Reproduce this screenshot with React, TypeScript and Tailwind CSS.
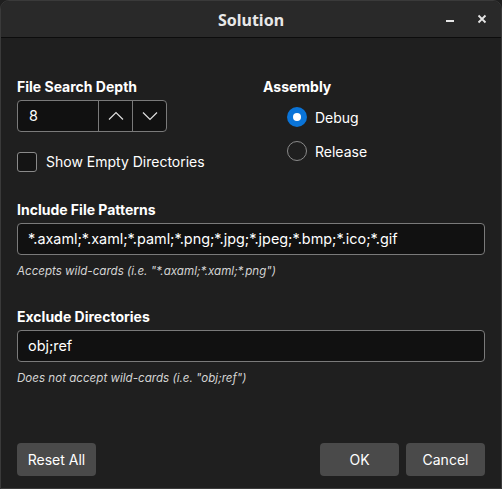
function Chevron({ up }: { up?: boolean }) {
  return (
    <svg width="16" height="10" viewBox="0 0 16 10">
      <path
        d={up ? 'M1 8.5 L8 1.5 L15 8.5' : 'M1 1.5 L8 8.5 L15 1.5'}
        fill="none"
        stroke="#e0e0e0"
        strokeWidth="1.2"
      />
    </svg>
  );
}

function App() {
  return (
    <div className="w-[502px] h-[489px] bg-[#1f1f1f] text-white overflow-hidden">
      <div className="w-full h-full flex flex-col border border-[#3a3a3a] rounded-t-[9px] overflow-hidden font-['Inter',sans-serif]">
        {/* title bar */}
        <div className="h-[37px] shrink-0 bg-[#292929] border-b border-[#0c0c0c] flex items-center justify-center relative">
          <span className="font-['Noto_Sans',sans-serif] font-bold text-[16px] text-[#e8e8e8] mt-[1px]">Solution</span>
          <div className="absolute right-[14px] top-0 h-full flex items-center gap-[23px]">
            <span className="block w-[8px] h-[2px] bg-[#e6e6e6] mt-[4px]" />
            <svg width="10" height="10" viewBox="0 0 10 10" className="-mt-[1px]">
              <path d="M1.5 1.5 L8.5 8.5 M8.5 1.5 L1.5 8.5" stroke="#e6e6e6" strokeWidth="1.8" />
            </svg>
          </div>
        </div>

        {/* body */}
        <div className="flex-1 flex flex-col px-4 pt-[40px] pb-[12px]">
          <div className="flex">
            <div className="w-[246px] flex flex-col">
              <label className="text-[14px] leading-[17px] font-bold">File Search Depth</label>
              <div className="mt-[5px] w-[150px] h-[32px] flex border border-[#7a7a7a] rounded-[4px] bg-[#111111] overflow-hidden">
                <div className="flex-1 flex items-center pl-[11px] text-[14.4px]">8</div>
                <div className="w-[34px] border-l border-[#7a7a7a] flex items-center justify-center">
                  <Chevron up />
                </div>
                <div className="w-[34px] border-l border-[#7a7a7a] flex items-center justify-center">
                  <Chevron />
                </div>
              </div>
              <div className="mt-[19px] flex items-center gap-[9px]">
                <div className="w-[20px] h-[20px] border border-[#8a8a8a] rounded-[3px] bg-[#141414]" />
                <span className="text-[14px]">Show Empty Directories</span>
              </div>
            </div>

            <div className="flex flex-col">
              <label className="text-[14px] leading-[17px] font-bold">Assembly</label>
              <div className="mt-[12px] ml-[24px] flex flex-col gap-[14px]">
                <div className="flex items-center gap-[8px] h-[20px]">
                  <div className="w-[20px] h-[20px] rounded-full bg-[#0a74d8] flex items-center justify-center">
                    <div className="w-[8px] h-[8px] rounded-full bg-white" />
                  </div>
                  <span className="text-[14px]">Debug</span>
                </div>
                <div className="flex items-center gap-[8px] h-[20px]">
                  <div className="w-[20px] h-[20px] rounded-full border border-[#8a8a8a]" />
                  <span className="text-[14px]">Release</span>
                </div>
              </div>
            </div>
          </div>

          <label className="mt-[29px] text-[14px] leading-[17px] font-bold">Include File Patterns</label>
          <div className="mt-[5px] h-[32px] border border-[#7a7a7a] rounded-[4px] bg-[#111111] flex items-center pl-[10px] text-[14.4px]">
            *.axaml;*.xaml;*.paml;*.png;*.jpg;*.jpeg;*.bmp;*.ico;*.gif
          </div>
          <p className="mt-[9px] text-[11.6px] leading-[15px] italic text-[#d4d4d4]">Accepts wild-cards (i.e. "*.axaml;*.xaml;*.png")</p>

          <label className="mt-[29px] text-[14px] leading-[17px] font-bold">Exclude Directories</label>
          <div className="mt-[5px] h-[32px] border border-[#7a7a7a] rounded-[4px] bg-[#111111] flex items-center pl-[10px] text-[14.4px]">
            obj;ref
          </div>
          <p className="mt-[9px] text-[11.6px] leading-[15px] italic text-[#d4d4d4]">Does not accept wild-cards (i.e. "obj;ref")</p>

          {/* buttons */}
          <div className="mt-auto flex items-center">
            <button className="w-[79px] h-[33px] rounded-[4px] bg-[#4a4a4a] text-[14px] text-white">Reset All</button>
            <div className="ml-auto flex gap-[7px]">
              <button className="w-[79px] h-[33px] rounded-[4px] bg-[#4a4a4a] text-[14px] text-white">OK</button>
              <button className="w-[79px] h-[33px] rounded-[4px] bg-[#4a4a4a] text-[14px] text-white">Cancel</button>
            </div>
          </div>
        </div>
      </div>
    </div>
  );
}

export default App;
